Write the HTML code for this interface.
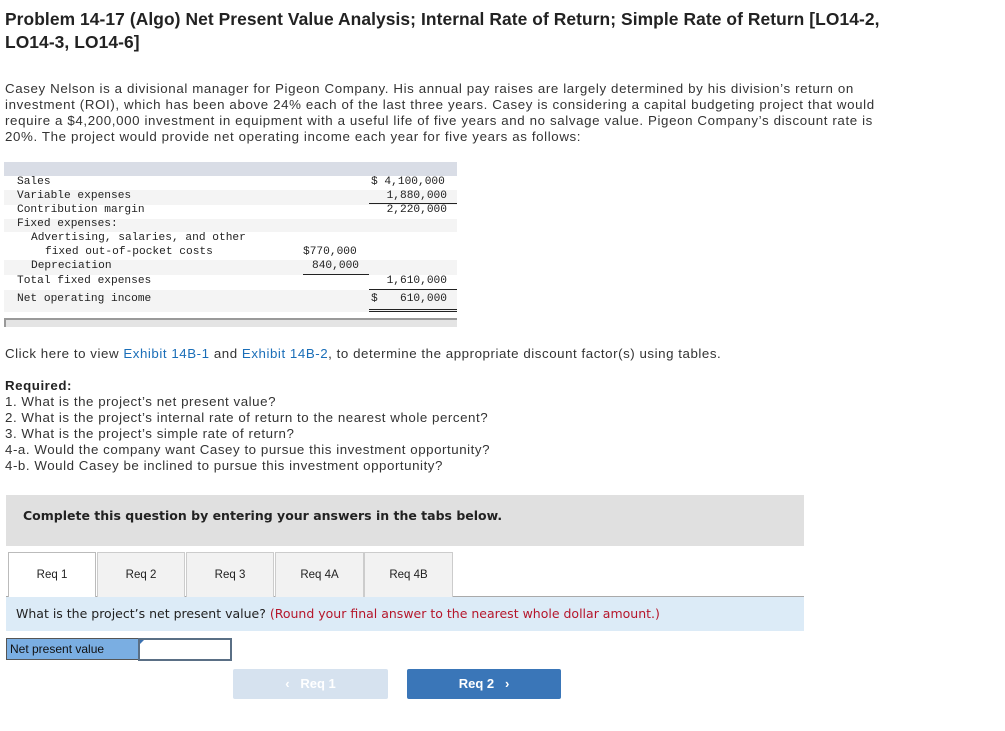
<!DOCTYPE html>
<html><head><style>
body{margin:0;width:1005px;height:731px;background:#fff;position:relative;font-family:"Liberation Sans",sans-serif;color:#222;overflow:hidden}
.a{position:absolute;white-space:nowrap}
h1{position:absolute;left:5px;top:8px;margin:0;font-size:17.4px;letter-spacing:0.08px;line-height:23px;font-weight:bold;color:#222;width:950px;white-space:nowrap}
.p{position:absolute;left:5px;top:81px;font-size:13.3px;letter-spacing:0.62px;line-height:16px;color:#333;white-space:nowrap}
.m{font-family:"Liberation Mono",monospace;font-size:11.2px;color:#222;position:absolute;white-space:nowrap}
.r{text-align:right}
.bg{position:absolute;left:4px;width:453px}
a{color:#1a6eb8}
.t{letter-spacing:0.55px}
</style></head><body>
<h1>Problem 14-17 (Algo) Net Present Value Analysis; Internal Rate of Return; Simple Rate of Return [LO14-2,<br>LO14-3, LO14-6]</h1>
<div class="p">Casey Nelson is a divisional manager for Pigeon Company. His annual pay raises are largely determined by his division’s return on<br>investment (ROI), which has been above 24% each of the last three years. Casey is considering a capital budgeting project that would<br>require a $4,200,000 investment in equipment with a useful life of five years and no salvage value. Pigeon Company’s discount rate is<br>20%. The project would provide net operating income each year for five years as follows:</div>

<div class="bg" style="top:162px;height:14px;background:#d9dde6"></div>
<div class="bg" style="top:190px;height:15px;background:#f4f4f4"></div>
<div class="bg" style="top:219px;height:13px;background:#f4f4f4"></div>
<div class="bg" style="top:260px;height:15px;background:#f4f4f4"></div>
<div class="bg" style="top:290px;height:22px;background:#f4f4f4"></div>
<div class="bg" style="top:318px;height:7px;background:#e4e4e4;border-top:2px solid #999;border-left:2px solid #999;width:451px"></div>

<div class="m" style="left:17px;top:176px">Sales</div>
<div class="m" style="left:17px;top:190px">Variable expenses</div>
<div class="m" style="left:17px;top:204px">Contribution margin</div>
<div class="m" style="left:17px;top:218px">Fixed expenses:</div>
<div class="m" style="left:31px;top:232px">Advertising, salaries, and other</div>
<div class="m" style="left:45px;top:246px">fixed out-of-pocket costs</div>
<div class="m" style="left:31px;top:260px">Depreciation</div>
<div class="m" style="left:17px;top:275px">Total fixed expenses</div>
<div class="m" style="left:17px;top:293px">Net operating income</div>

<div class="m" style="left:371px;top:176px">$ 4,100,000</div>
<div class="m r" style="left:369px;width:78px;top:190px">1,880,000</div>
<div style="position:absolute;left:369px;top:203px;width:88px;border-top:1px solid #222"></div>
<div class="m r" style="left:369px;width:78px;top:204px">2,220,000</div>
<div class="m" style="left:303px;top:246px">$770,000</div>
<div class="m r" style="left:303px;width:56px;top:260px">840,000</div>
<div style="position:absolute;left:303px;top:274px;width:66px;border-top:1px solid #222"></div>
<div class="m r" style="left:369px;width:78px;top:275px">1,610,000</div>
<div style="position:absolute;left:369px;top:289px;width:88px;border-top:1px solid #222"></div>
<div class="m" style="left:371px;top:293px">$</div>
<div class="m r" style="left:369px;width:78px;top:293px">610,000</div>
<div style="position:absolute;left:369px;top:309px;width:88px;height:1px;border-top:1px solid #222;border-bottom:1px solid #222"></div>

<div class="a t" style="left:5px;top:346px;font-size:13.3px;color:#333">Click here to view <a>Exhibit 14B-1</a> and <a>Exhibit 14B-2</a>, to determine the appropriate discount factor(s) using tables.</div>
<div class="a t" style="left:5px;top:378px;font-size:13.3px;line-height:16px;color:#333"><b style="color:#222">Required:</b><br>1. What is the project’s net present value?<br>2. What is the project’s internal rate of return to the nearest whole percent?<br>3. What is the project’s simple rate of return?<br>4-a. Would the company want Casey to pursue this investment opportunity?<br>4-b. Would Casey be inclined to pursue this investment opportunity?</div>

<div style="position:absolute;left:6px;top:495px;width:798px;height:51px;background:#e0e0e0"></div>
<div class="a" style="left:23px;top:508px;font-weight:bold;color:#222;font-family:'DejaVu Sans',sans-serif;font-size:12.5px">Complete this question by entering your answers in the tabs below.</div>

<div style="position:absolute;left:6px;top:596px;width:798px;border-top:1px solid #aaa"></div>
<div class="a" style="left:8px;top:552px;width:86px;height:45px;background:#fff;border:1px solid #bbb;border-bottom:none;font-size:11.5px;text-align:center;line-height:45px">Req 1</div>
<div class="a" style="left:97px;top:552px;width:86px;height:44px;background:#f2f2f2;border:1px solid #ccc;font-size:11.5px;text-align:center;line-height:44px">Req 2</div>
<div class="a" style="left:186px;top:552px;width:86px;height:44px;background:#f2f2f2;border:1px solid #ccc;font-size:11.5px;text-align:center;line-height:44px">Req 3</div>
<div class="a" style="left:275px;top:552px;width:87px;height:44px;background:#f2f2f2;border:1px solid #ccc;font-size:11.5px;text-align:center;line-height:44px">Req 4A</div>
<div class="a" style="left:364px;top:552px;width:87px;height:44px;background:#f2f2f2;border:1px solid #ccc;font-size:11.5px;text-align:center;line-height:44px">Req 4B</div>

<div style="position:absolute;left:6px;top:597px;width:798px;height:34px;background:#dcebf7"></div>
<div class="a" style="left:16px;top:606px;font-size:12.5px;font-family:'DejaVu Sans',sans-serif;color:#222">What is the project’s net present value? <span style="color:#b5162b">(Round your final answer to the nearest whole dollar amount.)</span></div>

<div class="a" style="left:6px;top:638px;width:130px;height:20px;background:#7aaee2;border:1px solid #555;font-size:12px;line-height:20px;padding-left:3px;color:#111">Net present value</div>
<div class="a" style="left:138px;top:638px;width:90px;height:19px;background:#fff;border:2px solid #5a6f85"></div>
<div class="a" style="left:140px;top:640px;width:0;height:0;border-left:4px solid #3a70b0;border-bottom:4px solid transparent"></div>

<div class="a" style="left:233px;top:669px;width:155px;height:30px;background:#d6e2ef;border-radius:2px;color:#fff;font-weight:bold;font-size:13px;text-align:center;line-height:30px">‹&nbsp;&nbsp;&nbsp;Req 1</div>
<div class="a" style="left:407px;top:669px;width:154px;height:30px;background:#3a76b8;border-radius:2px;color:#fff;font-weight:bold;font-size:13px;text-align:center;line-height:30px">Req 2&nbsp;&nbsp;&nbsp;›</div>
</body></html>
